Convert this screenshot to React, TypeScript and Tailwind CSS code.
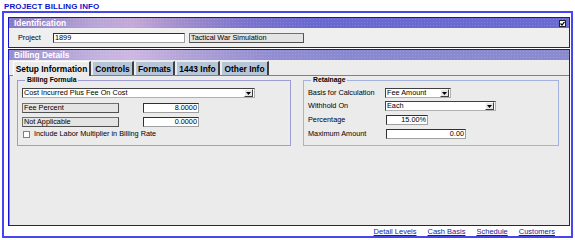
import React from 'react';

const ArrowButton: React.FC = () => (
  <div className="w-[9px] h-[8px] mr-[1px] bg-[#e6e6e6] border border-t-white border-l-white border-b-[#404040] border-r-[#404040] flex items-center justify-center">
    <svg width="5" height="3" viewBox="0 0 5 3">
      <polygon points="0,0 5,0 2.5,3" fill="#000" />
    </svg>
  </div>
);

const Select: React.FC<{ value: string; width: string }> = ({ value, width }) => (
  <div
    className={`${width} h-[10px] bg-white border border-t-[#404040] border-l-[#404040] border-b-[#b0b0b0] border-r-[#b0b0b0] flex items-center justify-between`}
  >
    <span className="pl-[1px] leading-[8px]">{value}</span>
    <ArrowButton />
  </div>
);

const TextBox: React.FC<{ value: string; width: string; right?: boolean }> = ({ value, width, right }) => (
  <div
    className={`${width} h-[10px] bg-white border border-t-[#303030] border-l-[#303030] border-b-[#a0a0a0] border-r-[#a0a0a0] flex items-center px-[1px] leading-[8px] ${
      right ? 'justify-end' : ''
    }`}
  >
    {value}
  </div>
);

const GrayBox: React.FC<{ value: string; width: string }> = ({ value, width }) => (
  <div
    className={`${width} h-[10px] bg-[#e4e4e4] border border-t-[#707070] border-l-[#707070] border-b-[#505050] border-r-[#505050] flex items-center px-[1px] leading-[8px]`}
  >
    {value}
  </div>
);

const tabs = ['Setup Information', 'Controls', 'Formats', '1443 Info', 'Other Info'];
const tabWidths = ['w-[78px]', 'w-[42px]', 'w-[40px]', 'w-[44px]', 'w-[48px]'];

export default function App() {
  return (
    <div className="w-[575px] h-[240px] bg-white overflow-hidden font-['Liberation_Sans',Arial,sans-serif] text-[7.3px] text-black">
      {/* Page title */}
      <div className="h-[11px] pl-[4px] pt-[2px] leading-[9px] text-[8px] font-bold tracking-[0.1px] text-[#1010c8]">
        PROJECT BILLING INFO
      </div>

      {/* Outer frame */}
      <div className="ml-[2px] w-[571px] h-[227px] border-2 border-[#4646f0] flex flex-col pt-[4px] pl-[4px]">
        {/* Identification */}
        <div className="w-[562px] h-[31px] border border-[#1414d4] flex flex-col">
          <div className="h-[10px] flex items-center justify-between bg-[radial-gradient(circle,rgba(255,255,255,0.16)_0.6px,transparent_0.9px),linear-gradient(90deg,#8878bc_0%,#b9a6d8_16%,#c4a8d8_22%,#a38fcc_30%,#7c74cc_42%,#6868d0_55%,#6a6ad2_100%)] bg-[length:3px_3px,100%_100%]">
            <span className="pl-[5px] text-white font-bold text-[8.4px] leading-[10px]">Identification</span>
            <div className="mr-[3px] w-[7px] h-[7px] bg-white border border-[#202020] flex items-center justify-center">
              <svg width="5" height="5" viewBox="0 0 5 5">
                <path d="M0.5 2.5 L2 4 L4.5 0.8" stroke="#000" strokeWidth="1.2" fill="none" />
              </svg>
            </div>
          </div>
          <div className="flex-1 bg-[#efefef] flex items-center pl-[9px]">
            <span className="w-[35px] leading-[8px]">Project</span>
            <TextBox value="1899" width="w-[132px]" />
            <div className="ml-[4px]">
              <GrayBox value="Tactical War Simulation" width="w-[115px]" />
            </div>
          </div>
        </div>

        {/* Billing Details */}
        <div className="mt-[1px] w-[562px] h-[177px] border border-[#1414d4] flex flex-col">
          <div className="h-[10px] flex items-center bg-[radial-gradient(circle,rgba(255,255,255,0.16)_0.6px,transparent_0.9px),linear-gradient(90deg,#9a8cc8_0%,#c2b2e0_16%,#cdb6e2_22%,#b0a2d6_32%,#948ed2_45%,#8888d0_60%,#8a8ad0_100%)] bg-[length:3px_3px,100%_100%]">
            <span className="pl-[5px] text-white font-bold text-[8.4px] leading-[10px]">Billing Details</span>
          </div>

          {/* Tabs */}
          <div className="h-[15px] flex items-end pl-[4px] gap-[1px] bg-[#ececec]">
            {tabs.map((t, i) =>
              i === 0 ? (
                <div
                  key={t}
                  className={`${tabWidths[i]} h-[15px] -mb-[1px] relative z-10 bg-[#ececec] border-t border-l border-t-white border-l-white border-r-2 border-r-[#404040] flex items-center justify-center font-bold text-[8.4px] leading-[10px]`}
                >
                  {t}
                </div>
              ) : (
                <div
                  key={t}
                  className={`${tabWidths[i]} h-[14px] bg-[#b6c6d8] border-t border-l border-t-[#e8eef6] border-l-[#e8eef6] border-r-2 border-r-[#404040] flex items-center justify-center font-bold text-[8.4px] leading-[10px]`}
                >
                  {t}
                </div>
              )
            )}
          </div>

          {/* Tab content */}
          <div className="flex-1 bg-[#ebebeb] border-t border-t-[#808080] border-l border-l-[#909090] flex items-start pl-[7px] gap-[12px]">
            {/* Billing Formula */}
            <fieldset className="w-[274px] h-[70px] border border-[#9c9cd2] pl-[4px] pr-0 pt-[4px] flex flex-col">
              <legend className="ml-[3px] px-[2px] font-bold text-[6.8px] leading-[8px]">Billing Formula</legend>
              <Select value="Cost Incurred Plus Fee On Cost" width="w-[233px]" />
              <div className="mt-[5px] flex items-center">
                <GrayBox value="Fee Percent" width="w-[97px]" />
                <div className="ml-[24px]">
                  <TextBox value="8.0000" width="w-[56px]" right />
                </div>
              </div>
              <div className="mt-[4px] flex items-center">
                <GrayBox value="Not Applicable" width="w-[97px]" />
                <div className="ml-[24px]">
                  <TextBox value="0.0000" width="w-[56px]" right />
                </div>
              </div>
              <div className="mt-[3px] flex items-center pl-[1px]">
                <div className="w-[7px] h-[7px] bg-white border border-[#808080]" />
                <span className="ml-[4px] leading-[8px]">Include Labor Multiplier in Billing Rate</span>
              </div>
            </fieldset>

            {/* Retainage */}
            <fieldset className="w-[256px] h-[70px] border border-[#a4b2e0] pl-[4px] pr-0 pt-[4px] flex flex-col">
              <legend className="ml-[3px] px-[2px] font-bold text-[6.8px] leading-[8px]">Retainage</legend>
              <div className="flex items-center">
                <span className="w-[77px] leading-[8px]">Basis for Calculation</span>
                <Select value="Fee Amount" width="w-[66px]" />
              </div>
              <div className="mt-[3px] flex items-center">
                <span className="w-[77px] leading-[8px]">Withhold On</span>
                <Select value="Each" width="w-[111px]" />
              </div>
              <div className="mt-[4px] flex items-center">
                <span className="w-[78px] leading-[8px]">Percentage</span>
                <TextBox value="15.00%" width="w-[42px]" right />
              </div>
              <div className="mt-[4px] flex items-center">
                <span className="w-[78px] leading-[8px]">Maximum Amount</span>
                <TextBox value="0.00" width="w-[80px]" right />
              </div>
            </fieldset>
          </div>
        </div>

        {/* Links */}
        <div className="h-[10px] flex items-center justify-end pr-[16px] gap-[11px] text-[7.5px] leading-[9px] text-[#1a1a9c]">
          <a className="underline">Detail Levels</a>
          <a className="underline">Cash Basis</a>
          <a className="underline">Schedule</a>
          <a className="underline">Customers</a>
        </div>
      </div>
    </div>
  );
}
